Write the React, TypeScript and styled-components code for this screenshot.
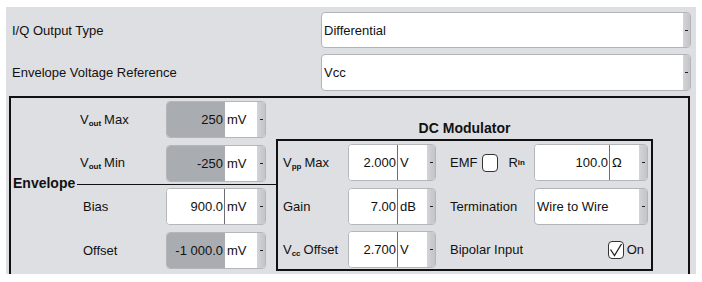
import React from "react";
import styled, { createGlobalStyle } from "styled-components";

const Global = createGlobalStyle`
  html, body { margin: 0; padding: 0; background: #ffffff; }
  body { font-family: "Liberation Sans", Arial, sans-serif; font-size: 13px; color: #111; }
`;

const Panel = styled.div`
  margin: 7px 0 0 6px;
  width: 690px;
  height: 267px;
  background: #dedfe3;
  overflow: hidden;
  box-sizing: border-box;
  padding-top: 5px;
  display: flex;
  flex-direction: column;
`;

const TopRow = styled.div`
  display: flex;
  align-items: center;
  height: 36px;
  margin-bottom: ${(p: { gap?: number }) => p.gap ?? 6}px;
`;

const TopLabel = styled.div`
  width: 315px;
  padding-left: 6px;
  box-sizing: border-box;
`;

const Select = styled.div<{ w: number; h?: number }>`
  width: ${(p) => p.w}px;
  height: ${(p) => p.h ?? 36}px;
  box-sizing: border-box;
  display: flex;
  background: #fff;
  border: 1px solid #b3b4b8;
  border-radius: 4px;
  overflow: hidden;
`;

const SelectText = styled.div`
  flex: 1;
  display: flex;
  align-items: center;
  padding-left: 2px;
`;

const Drop = styled.div<{ w?: number }>`
  width: ${(p) => p.w ?? 7}px;
  background: linear-gradient(to right, #d3d4d7, #c3c4c7);
  display: flex;
  align-items: center;
  justify-content: center;
  &::after {
    content: "";
    width: 3px;
    height: 1px;
    background: #222;
  }
`;

const BigBox = styled.div`
  margin-left: 3px;
  width: 681px;
  height: 190px;
  flex-shrink: 0;
  border: 2px solid #111;
  box-sizing: border-box;
  display: flex;
  position: relative;
`;

const EnvCol = styled.div`
  width: 265px;
  padding-top: 3px;
  display: flex;
  flex-direction: column;
  gap: 6.5px;
`;

const EnvRow = styled.div`
  height: 37px;
  display: flex;
  align-items: center;
`;

const EnvLabel = styled.div<{ indent: number }>`
  width: 155px;
  padding-left: ${(p) => p.indent}px;
  box-sizing: border-box;
`;

const Sub = styled.span`
  font-size: 8px;
  font-weight: bold;
  vertical-align: -2px;
  margin-right: 3px;
`;

const Field = styled.div<{ w: number }>`
  width: ${(p) => p.w}px;
  height: 37px;
  box-sizing: border-box;
  display: flex;
  border: 1px solid #b5b6ba;
  border-radius: 4px;
  overflow: hidden;
  background: #fff;
`;

const Value = styled.div<{ gray?: boolean }>`
  flex: 1;
  display: flex;
  align-items: center;
  justify-content: flex-end;
  padding-right: 1px;
  background: ${(p) => (p.gray ? "#a9adb2" : "#ffffff")};
  border-right: 1px solid ${(p) => (p.gray ? "#a9adb2" : "#6e6f72")};
`;

const Unit = styled.div<{ w: number }>`
  width: ${(p) => p.w}px;
  display: flex;
  align-items: center;
  padding-left: 2px;
  box-sizing: border-box;
  background: #fff;
`;

const Legend = styled.div`
  position: absolute;
  left: 2px;
  top: 77px;
  width: 265px;
  display: flex;
  align-items: center;
  font-weight: bold;
  font-size: 14px;
  pointer-events: none;
  &::after {
    content: "";
    flex: 1;
    height: 1px;
    background: #111;
    margin-left: 2px;
    margin-top: 2px;
  }
`;

const DcCol = styled.div`
  flex: 1;
  display: flex;
  flex-direction: column;
`;

const DcTitle = styled.div`
  width: 377px;
  height: 41px;
  display: flex;
  align-items: flex-end;
  justify-content: center;
  padding-bottom: 3px;
  box-sizing: border-box;
  font-weight: bold;
  font-size: 14px;
`;

const DcBox = styled.div`
  width: 377px;
  height: 132px;
  border: 2px solid #111;
  box-sizing: border-box;
  padding: 3px 0 0 5px;
  display: flex;
  flex-direction: column;
  gap: 6.5px;
`;

const DcRow = styled.div`
  height: 37px;
  display: grid;
  grid-template-columns: 65px 88px 14px 84px 114px;
  align-items: center;
`;

const Label2 = styled.div<{ span?: boolean }>`
  grid-column: ${(p) => (p.span ? "4 / 5" : "auto")};
  display: flex;
  align-items: center;
`;

const Check = styled.div`
  width: 16px;
  height: 18px;
  box-sizing: border-box;
  border: 1px solid #333;
  border-radius: 4px;
  background: #fff;
  display: flex;
  align-items: center;
  justify-content: center;
`;

const EmfCheck = styled(Check)`
  margin: 0 10px 0 5px;
`;

const OnBox = styled.div`
  grid-column: 5 / 6;
  display: flex;
  align-items: center;
  justify-content: flex-end;
  gap: 3px;
  padding-right: 4px;
`;

const Spacer = styled.div``;

type NumProps = { w: number; value: string; unit: string; unitW: number; gray?: boolean };
const NumField = ({ w, value, unit, unitW, gray }: NumProps) => (
  <Field w={w}>
    <Value gray={gray}>{value}</Value>
    <Unit w={unitW}>{unit}</Unit>
    <Drop w={8} />
  </Field>
);

export default function App() {
  return (
    <>
      <Global />
      <Panel>
        <TopRow>
          <TopLabel>I/Q Output Type</TopLabel>
          <Select w={370}>
            <SelectText>Differential</SelectText>
            <Drop />
          </Select>
        </TopRow>
        <TopRow gap={6}>
          <TopLabel>Envelope Voltage Reference</TopLabel>
          <Select w={370} h={37}>
            <SelectText>Vcc</SelectText>
            <Drop />
          </Select>
        </TopRow>
        <BigBox>
          <EnvCol>
            <EnvRow>
              <EnvLabel indent={69}>
                V<Sub>out</Sub>Max
              </EnvLabel>
              <NumField w={100} value="250" unit="mV" unitW={32} gray />
            </EnvRow>
            <EnvRow>
              <EnvLabel indent={69}>
                V<Sub>out</Sub>Min
              </EnvLabel>
              <NumField w={100} value="-250" unit="mV" unitW={32} gray />
            </EnvRow>
            <EnvRow>
              <EnvLabel indent={72}>Bias</EnvLabel>
              <NumField w={100} value="900.0" unit="mV" unitW={32} />
            </EnvRow>
            <EnvRow>
              <EnvLabel indent={72}>Offset</EnvLabel>
              <NumField w={100} value="-1 000.0" unit="mV" unitW={32} gray />
            </EnvRow>
          </EnvCol>
          <Legend>Envelope</Legend>
          <DcCol>
            <DcTitle>DC Modulator</DcTitle>
            <DcBox>
              <DcRow>
                <div>
                  V<Sub>pp</Sub>Max
                </div>
                <NumField w={88} value="2.000" unit="V" unitW={29} />
                <Spacer />
                <Label2>
                  EMF
                  <EmfCheck />
                  R<Sub>in</Sub>
                </Label2>
                <NumField w={114} value="100.0" unit="Ω" unitW={29} />
              </DcRow>
              <DcRow>
                <div>Gain</div>
                <NumField w={88} value="7.00" unit="dB" unitW={29} />
                <Spacer />
                <Label2>Termination</Label2>
                <Select w={114} h={37}>
                  <SelectText>Wire to Wire</SelectText>
                  <Drop w={8} />
                </Select>
              </DcRow>
              <DcRow>
                <div>
                  V<Sub>cc</Sub>Offset
                </div>
                <NumField w={88} value="2.700" unit="V" unitW={29} />
                <Spacer />
                <Label2>Bipolar Input</Label2>
                <OnBox>
                  <Check>
                    <svg width="14" height="14" viewBox="0 0 14 14">
                      <path d="M1.5 6.5 L5.5 12.5 L12.5 1" fill="none" stroke="#222" strokeWidth="1.3" />
                    </svg>
                  </Check>
                  On
                </OnBox>
              </DcRow>
            </DcBox>
          </DcCol>
        </BigBox>
      </Panel>
    </>
  );
}
